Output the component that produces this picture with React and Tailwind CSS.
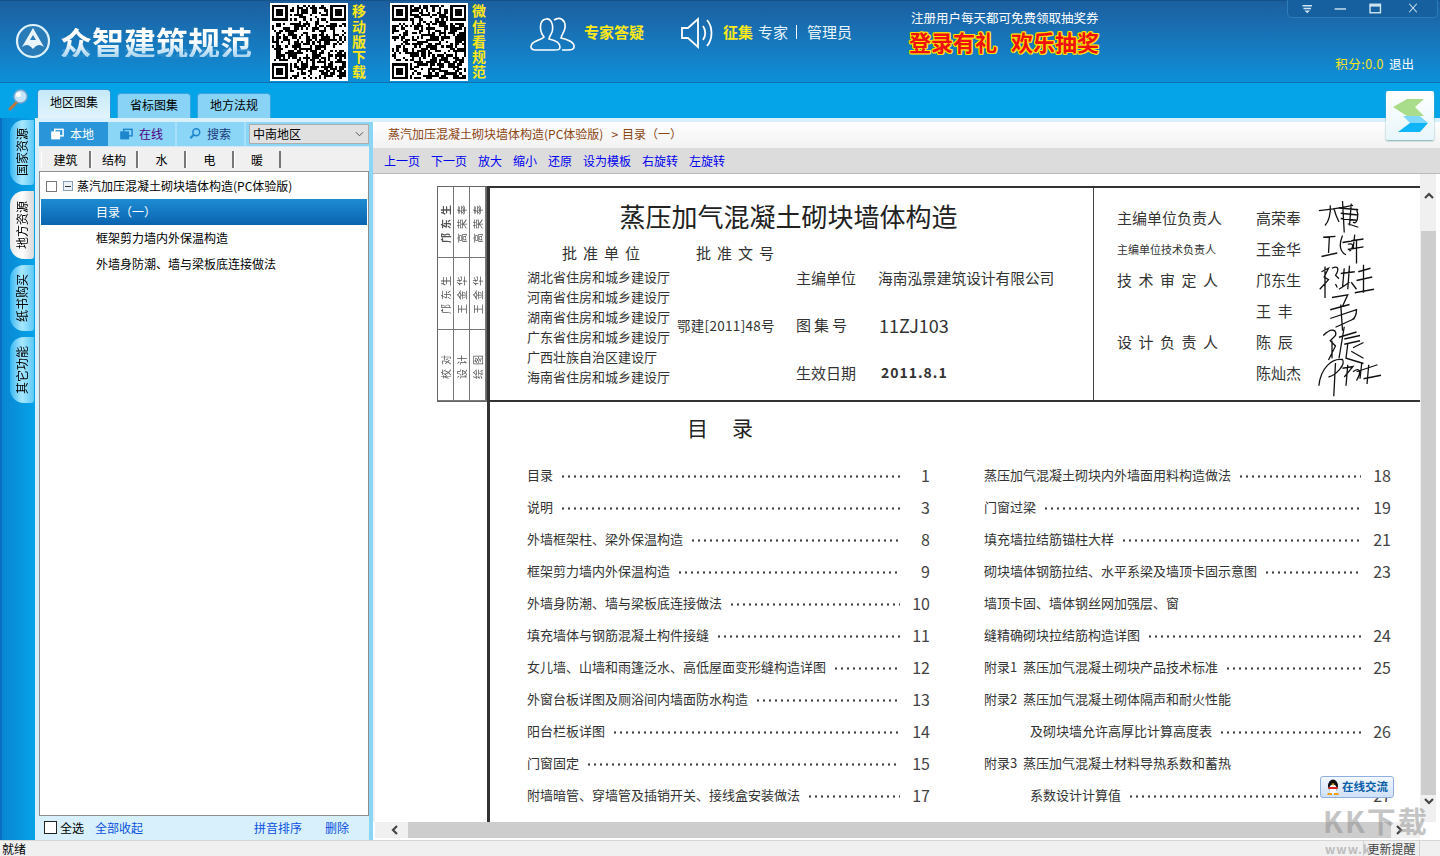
import React from "react";

const CJK = '"Noto Sans CJK SC","Noto Sans",sans-serif';

function qrPath(seed) {
  const n = 33;
  let s = seed;
  const rnd = () => {
    s = (s * 1664525 + 1013904223) >>> 0;
    return (s >>> 16) & 1;
  };
  let d = "";
  const inFinder = (x, y) =>
    (x < 8 && y < 8) || (x >= n - 8 && y < 8) || (x < 8 && y >= n - 8);
  for (let y = 0; y < n; y++) {
    for (let x = 0; x < n; x++) {
      if (!inFinder(x, y) && rnd()) d += `M${x} ${y}h1v1h-1z`;
    }
  }
  const finder = (a, b) =>
    `M${a} ${b}h7v7h-7zM${a + 1} ${b + 1}v5h5v-5zM${a + 2} ${b + 2}h3v3h-3z`;
  return d + finder(0, 0) + finder(n - 7, 0) + finder(0, n - 7);
}

function QR({ seed }) {
  return (
    <div className="w-[78px] h-[78px] bg-white p-[2px] shrink-0">
      <svg viewBox="0 0 33 33" className="w-full h-full" shapeRendering="crispEdges">
        <path d={qrPath(seed)} fill="#000" fillRule="evenodd" />
      </svg>
    </div>
  );
}

function VText({ chars }) {
  return (
    <div className="w-[15px] h-[78px] flex items-center justify-center text-[14px] leading-[15px] font-bold text-[#ffe81a] tracking-[1.2px] [writing-mode:vertical-rl]">
      {chars}
    </div>
  );
}

function SideTab({ label, active, h }) {
  return (
    <div
      className={`w-[24px] ml-[10px] rounded-tl-[14px] rounded-bl-[14px] rounded-br-[3px] flex items-center justify-center text-[12px] text-black ${
        active
          ? "bg-gradient-to-r from-[#e8e8e8] via-white to-[#d8d8d8]"
          : "bg-gradient-to-r from-[#2cb6f0] via-[#a6e8ff] to-[#5cc8f5]"
      } ${h}`}
    >
      <span className="[writing-mode:vertical-rl] [text-orientation:sideways] rotate-180">{label}</span>
    </div>
  );
}

const leftToc = [
  ["目录", "1"],
  ["说明", "3"],
  ["外墙框架柱、梁外保温构造", "8"],
  ["框架剪力墙内外保温构造", "9"],
  ["外墙身防潮、墙与梁板底连接做法", "10"],
  ["填充墙体与钢筋混凝土构件接缝", "11"],
  ["女儿墙、山墙和雨篷泛水、高低屋面变形缝构造详图", "12"],
  ["外窗台板详图及厕浴间内墙面防水构造", "13"],
  ["阳台栏板详图", "14"],
  ["门窗固定", "15"],
  ["附墙暗管、穿墙管及插销开关、接线盒安装做法", "17"],
];
const rightToc = [
  ["蒸压加气混凝土砌块内外墙面用料构造做法", "18"],
  ["门窗过梁", "19"],
  ["填充墙拉结筋锚柱大样", "21"],
  ["砌块墙体钢筋拉结、水平系梁及墙顶卡固示意图", "23"],
  ["墙顶卡固、墙体钢丝网加强层、窗", ""],
  ["缝精确砌块拉结筋构造详图", "24"],
  ["附录1  蒸压加气混凝土砌块产品技术标准", "25"],
  ["附录2  蒸压加气混凝土砌体隔声和耐火性能", ""],
  ["及砌块墙允许高厚比计算高度表", "26", true],
  ["附录3  蒸压加气混凝土材料导热系数和蓄热", ""],
  ["系数设计计算值", "27", true],
];

function TocRow({ text, num, indent }) {
  return (
    <div className={`h-[32px] flex items-center text-[13px] text-[#333] ${indent ? "pl-[46px]" : ""}`}>
      <span className="whitespace-pre">{text}</span>
      {num ? (
        <>
          <span className="flex-1 ml-[7px] mr-[8px] h-[3px] translate-y-[1px] bg-[radial-gradient(circle,#444_1px,transparent_1.3px)] bg-[length:6px_3px] bg-repeat-x" />
          <span className="text-[16px] w-[22px] text-right text-[#444]">{num}</span>
        </>
      ) : null}
    </div>
  );
}

const signs = [
  "M1 11 C12 10 24 8 40 5 M14 5 C15 14 12 24 8 28 M18 8 C20 16 22 20 24 24 M28 0 L30 36 M24 8 L46 10 M26 14 L46 16 M26 20 L44 22 M38 3 L36 28 M44 9 C47 16 45 28 40 24 M34 26 L46 30",
  "M6 6 L20 5 M13 6 L12 24 M4 28 L22 24 M28 4 C24 14 24 22 32 26 M28 12 L40 10 M34 14 C40 12 42 16 36 22 M42 3 L40 20 M38 10 L52 8 M34 20 L52 17 M44 10 L44 36",
  "M4 10 L12 6 L7 16 L12 19 L2 30 M8 4 L8 40 M16 6 C24 2 24 8 20 14 L24 18 M20 24 L22 28 M30 6 L28 28 M26 12 L42 10 M36 3 L34 30 M24 30 L36 22 M38 22 L44 30 M46 10 L60 6 M52 2 L52 34 M44 20 L62 16 M42 34 L64 30",
  "M16 4 L34 1 L28 14 M14 18 L36 12 M26 12 L28 42 M14 28 L44 18 C44 24 42 28 38 30 M20 38 L42 28",
  "M6 12 C16 2 22 6 20 12 L14 18 L20 24 L12 40 M16 18 L16 38 M30 2 L24 38 M24 14 L44 8 M30 16 L48 12 M30 22 L48 18 M34 22 L32 38 L52 44 M40 26 L52 20 M38 30 L52 38",
  "M1 34 C3 14 16 2 28 4 C32 10 20 22 12 24 M20 8 L18 46 M28 14 L40 12 L30 24 M34 10 L32 34 M40 18 C48 12 50 18 44 28 M50 8 L48 26 M44 18 L68 10 M52 26 L72 22 M58 10 L56 32",
];

function Sign({ d }) {
  return (
    <svg viewBox="0 0 64 40" className="w-[56px] h-[35px] overflow-visible ml-[2px]" fill="none" stroke="#111" strokeWidth="1.5">
      <path d={d} />
    </svg>
  );
}

function App() {
  return (
    <div
      className="w-[1440px] h-[856px] overflow-hidden relative flex flex-col bg-[#05a3e8] text-[12px]"
      style={{ fontFamily: CJK }}
    >
      {/* header */}
      <div className="h-[83px] shrink-0 flex bg-gradient-to-b from-[#1b5f9f] to-[#0b90d9] border-t border-[#14508a] border-b border-b-[#0f6fb2]">
        <div className="w-[270px] shrink-0 flex items-center pl-[15px] gap-[9px] pb-[2px]">
          <svg viewBox="0 0 36 36" className="w-[36px] h-[36px] shrink-0">
            <circle cx="18" cy="18" r="16" fill="#2a7cb8" stroke="#dff2fb" strokeWidth="2.2" />
            <path d="M18 5 L29 24 C25 21 22 21 18 26 C14 21 11 21 7 24 Z" fill="#eaf6fc" />
            <path d="M18 12 L21 17 L15 17 Z" fill="#2a7cb8" />
          </svg>
          <span className="text-[32px] leading-none font-bold whitespace-nowrap bg-gradient-to-b from-white via-white to-[#a8d4f0] bg-clip-text text-transparent [-webkit-box-reflect:below_-8px_linear-gradient(transparent_65%,rgba(255,255,255,0.22))]">
            众智建筑规范
          </span>
        </div>
        <div className="pt-[2px] flex gap-[3px] w-[120px] shrink-0">
          <QR seed={17} />
          <VText chars="移动版下载" />
        </div>
        <div className="pt-[2px] flex gap-[3px] w-[140px] shrink-0">
          <QR seed={92} />
          <VText chars="微信看规范" />
        </div>
        <div className="flex items-start pt-[14px] w-[150px] shrink-0 gap-[8px]">
          <svg viewBox="0 0 46 34" className="w-[46px] h-[34px] shrink-0 mt-[2px]" fill="none" stroke="#fff" strokeWidth="1.6">
            <path d="M14 20 C9 14 9 3 16 2 C21 1 24 8 22 15 C21 18 19 20 19 22 C24 23 30 25 30 30 C30 33 28 33 24 33 L5 33 C1 33 0 30 2 27 C4 24 11 23 14 20 Z" />
            <path d="M24 3 C30 -1 36 3 35 11 C34 16 31 19 31 21 C36 22 45 25 44 30 C44 33 41 33 38 33 L32 33" />
          </svg>
          <span className="text-[15px] font-bold text-[#ffe81a] leading-[34px] whitespace-nowrap">专家答疑</span>
        </div>
        <div className="flex items-start pt-[14px] w-[232px] shrink-0">
          <svg viewBox="0 0 36 32" className="w-[36px] h-[32px] shrink-0 mt-[2px]" fill="none" stroke="#fff" strokeWidth="1.8">
            <path d="M2 11 H8 L18 2 V30 L8 21 H2 Z" />
            <path d="M23 9 C26 13 26 19 23 23" />
            <path d="M27 3 C33 10 33 22 27 29" />
          </svg>
          <span className="ml-[7px] text-[15px] font-bold text-[#ffe81a] leading-[34px] whitespace-nowrap">征集</span>
          <span className="ml-[5px] text-[15px] text-[#e8f4fb] leading-[34px] whitespace-nowrap">专家</span>
          <span className="ml-[8px] mt-[10px] w-px h-[14px] bg-white" />
          <span className="ml-[10px] text-[15px] text-[#e8f4fb] leading-[34px] whitespace-nowrap">管理员</span>
        </div>
        <div className="flex flex-col w-[200px] shrink-0 pt-[9px] -ml-[3px]">
          <span className="text-[12.5px] leading-[16px] text-white whitespace-nowrap pl-[2px]">注册用户每天都可免费领取抽奖券</span>
          <div className="flex gap-[14px] mt-[1px] text-[22px] leading-[28px] font-bold text-[#f01010] [text-shadow:1px_0_#ffe000,-1px_0_#ffe000,0_1px_#ffe000,0_-1px_#ffe000,1px_1px_#ffe000,-1px_-1px_#ffe000,1px_-1px_#ffe000,-1px_1px_#ffe000] whitespace-nowrap">
            <span>登录有礼</span>
            <span>欢乐抽奖</span>
          </div>
        </div>
        <div className="flex-1 flex items-end justify-end pr-[26px] pb-[9px] gap-[5px] text-[12.5px] leading-[18px] whitespace-nowrap">
          <span className="text-[#f5e61a] tracking-[0.5px]">积分:0.0</span>
          <span className="text-white">退出</span>
        </div>
      </div>

      {/* window controls */}
      <div className="absolute top-0 right-[2px] w-[151px] h-[18px] bg-[#17609f] border border-t-0 border-[#2a7db8] rounded-b-[5px] flex items-center text-[#cfe4f2]">
        <svg viewBox="0 0 151 18" className="w-full h-full" fill="none" stroke="#cfe4f2" strokeWidth="1.5">
          <path d="M12 6 H22 M13 9 H21" />
          <path d="M14 11 H20 L17 14 Z" fill="#cfe4f2" stroke="none" />
          <path d="M46 9.5 H58" />
          <rect x="83.5" y="4.5" width="11" height="9" />
          <path d="M83 6 H95" strokeWidth="2" />
          <path d="M125 4 L133 13 M133 4 L125 13" strokeWidth="1.1" />
        </svg>
      </div>

      {/* tab strip */}
      <div className="h-[35px] shrink-0 flex items-end pl-[8px] bg-[#05a3e8]">
        <svg viewBox="0 0 20 22" className="w-[20px] h-[22px] mb-[7px] shrink-0">
          <path d="M9 13 L2 20" stroke="#b8763a" strokeWidth="3" strokeLinecap="round" />
          <circle cx="12.5" cy="7.5" r="6.5" fill="#c6e4fb" stroke="#7fa7cc" strokeWidth="1.4" />
          <circle cx="10.5" cy="5.5" r="2.5" fill="#fff" />
        </svg>
        <div className="ml-[9px] w-[74px] h-[29px] pb-[4px] rounded-t-[4px] bg-gradient-to-b from-[#c4e8fa] to-[#e2f4fd] border-t border-x border-[#2a95d8] flex items-center justify-center text-black">
          地区图集
        </div>
        <div className="ml-[6px] w-[74px] h-[25px] pb-[3px] rounded-t-[4px] bg-[#88d3f6] border-t border-x border-[#3aa6e0] flex items-center justify-center text-black">
          省标图集
        </div>
        <div className="ml-[6px] w-[74px] h-[25px] pb-[3px] rounded-t-[4px] bg-[#88d3f6] border-t border-x border-[#3aa6e0] flex items-center justify-center text-black">
          地方法规
        </div>
      </div>

      {/* logo card */}
      <div className="absolute left-[1386px] top-[91px] w-[48px] h-[49px] bg-gradient-to-b from-white to-[#e8f6fb] rounded-[2px] shadow-[0_1px_2px_#7aa]">
        <svg viewBox="0 0 48 49" className="w-full h-full">
          <path d="M21 8 H38 L29 16 L38 25 H21 L7 16 Z" fill="#a9dc8b" />
          <path d="M17 25 H34 L42 32 H24 Z" fill="#7fd8fb" />
          <path d="M24 32 H42 L34 41 H12 Z" fill="#10b4f8" />
        </svg>
      </div>

      {/* main */}
      <div className="flex-1 min-h-0 flex">
        {/* side tabs */}
        <div className="w-[35px] shrink-0 bg-gradient-to-r from-[#0a86d2] to-[#05a3e8] pt-[2px] border-l-2 border-[#0a6fc0]">
          <div className="-ml-[2px] flex flex-col gap-[6px]">
            <SideTab label="国家资源" h="h-[65px]" />
            <SideTab label="地方资源" active h="h-[68px]" />
            <SideTab label="纸书购买" h="h-[66px]" />
            <SideTab label="其它功能" h="h-[66px]" />
          </div>
        </div>

        {/* left panel */}
        <div className="w-[338px] shrink-0 bg-[#d8f0fc] pt-[4px] flex flex-col">
          <div className="flex flex-1 min-h-0">
            <div className="w-[4px] shrink-0" />
            <div className="w-[330px] shrink-0 flex flex-col">
              <div className="h-[24px] shrink-0 bg-[#8bd5f6] flex items-center">
                <div className="w-[69px] h-full pb-[1px] bg-[#2a95d8] text-white flex items-center gap-[6px] pl-[12px]">
                  <svg viewBox="0 0 14 12" className="w-[13px] h-[12px] shrink-0" fill="none" stroke="#fff" strokeWidth="1.6">
                    <rect x="4" y="1" width="9" height="7" />
                    <rect x="1" y="4" width="8" height="7" fill="#fff" />
                  </svg>
                  本地
                </div>
                <div className="w-[69px] h-full pb-[1px] flex items-center gap-[6px] pl-[12px] text-[#4b0082] border-r-2 border-[#a8e0f8]">
                  <svg viewBox="0 0 14 12" className="w-[13px] h-[12px] shrink-0" fill="none" stroke="#1e86cc" strokeWidth="1.6">
                    <rect x="4" y="1" width="9" height="7" />
                    <rect x="1" y="4" width="8" height="7" fill="#1e86cc" />
                  </svg>
                  在线
                </div>
                <div className="w-[69px] h-full pb-[1px] flex items-center gap-[6px] pl-[12px] text-[#1a3a7a] border-r-2 border-[#a8e0f8]">
                  <svg viewBox="0 0 14 14" className="w-[12px] h-[13px] shrink-0" fill="none" stroke="#1e86cc" strokeWidth="1.8">
                    <circle cx="8.5" cy="5.5" r="4" />
                    <path d="M5.5 8.5 L1.5 12.5" strokeWidth="2.4" />
                  </svg>
                  搜索
                </div>
                <div className="ml-[3px] w-[120px] h-[20px] bg-[#e1e1e1] border border-[#adadad] flex items-center justify-between pl-[3px] pr-[4px] text-black">
                  <span>中南地区</span>
                  <svg viewBox="0 0 10 6" className="w-[9px] h-[6px]" fill="none" stroke="#555" strokeWidth="1.1">
                    <path d="M1 1 L5 5 L9 1" />
                  </svg>
                </div>
              </div>
              <div className="h-[22px] shrink-0 bg-[#f0f0f0] pl-[2px] pt-[4px] flex border-t border-[#cfe8f6]">
                {[
                  ["建筑", "w-[50px]"],
                  ["结构", "w-[47px]"],
                  ["水", "w-[48px]"],
                  ["电", "w-[48px]"],
                  ["暖", "w-[47px]"],
                ].map(([t, w]) => (
                  <div key={t} className={`${w} h-[18px] border-r-2 border-[#777] border-l border-l-white flex items-center justify-center text-black`}>
                    {t}
                  </div>
                ))}
              </div>
              <div className="h-[3px] shrink-0 bg-[#f0f0f0]" />
              <div className="h-[645px] shrink-0 bg-white border border-[#8e8e8e] p-[1px] text-black flex flex-col">
                <div className="h-[26px] flex items-center pl-[5px] shrink-0">
                  <span className="w-[11px] h-[11px] border border-[#777] bg-white shrink-0" />
                  <span className="ml-[6px] w-[10px] h-[10px] border border-[#8aa0b8] bg-[#eef3f8] flex items-center justify-center shrink-0">
                    <span className="w-[6px] h-px bg-[#333]" />
                  </span>
                  <span className="ml-[4px] whitespace-nowrap">蒸汽加压混凝土砌块墙体构造(PC体验版)</span>
                </div>
                <div className="h-[26px] shrink-0 bg-gradient-to-b from-[#1d8cd2] to-[#0a64b0] text-white flex items-center pl-[55px]">
                  目录（一）
                </div>
                <div className="h-[26px] shrink-0 flex items-center pl-[55px]">框架剪力墙内外保温构造</div>
                <div className="h-[26px] shrink-0 flex items-center pl-[55px]">外墙身防潮、墙与梁板底连接做法</div>
              </div>
              <div className="flex-1 min-h-0 flex items-center pl-[5px] pb-[1px]">
                <span className="w-[13px] h-[13px] border border-[#222] bg-white shrink-0" />
                <span className="ml-[3px] text-black w-[35px]">全选</span>
                <span className="text-[#0a50e0] w-[159px]">全部收起</span>
                <span className="text-[#0a50e0] w-[71px]">拼音排序</span>
                <span className="text-[#0a50e0]">删除</span>
              </div>
            </div>
            <div className="w-[4px] shrink-0 bg-[#8bd6f7]" />
          </div>
        </div>

        {/* right pane */}
        <div className="flex-1 min-w-0 flex flex-col bg-white">
          <div className="h-[4px] shrink-0 bg-[#d8f0fc]" />
          <div className="h-[26px] pb-[2px] shrink-0 bg-gradient-to-b from-white to-[#f2f2f2] flex items-center pl-[15px] text-[#8b4513] whitespace-nowrap">
            <span>蒸汽加压混凝土砌块墙体构造(PC体验版)</span>
            <span className="ml-[8px]">&gt;</span>
            <span className="ml-[4px]">目录（一）</span>
          </div>
          <div className="h-[26px] shrink-0 bg-[#dcdcdc] border-b border-[#bbb] flex items-center pl-[11px] gap-[11px] text-[#0000ee] whitespace-nowrap">
            <span>上一页</span>
            <span>下一页</span>
            <span>放大</span>
            <span>缩小</span>
            <span>还原</span>
            <span>设为模板</span>
            <span>右旋转</span>
            <span>左旋转</span>
          </div>

          <div className="flex-1 min-h-0 flex">
            <div className="flex-1 min-w-0 flex flex-col">
              <div className="flex-1 min-h-0 flex">
                <div className="w-[2px] shrink-0 bg-[#f0f0f0]" />
                {/* page */}
                <div className="w-[1046px] shrink-0 overflow-hidden bg-white pt-[12px] pl-[62px] text-[#333]">
                  <div className="flex w-[984px]">
                    {/* stamp */}
                    <div className="w-[50px] h-[216px] shrink-0 border border-[#666] grid grid-cols-3 grid-rows-3 text-[10px] text-[#555]">
                      {[
                        ["邝东生", "font-bold"],
                        ["高荣奉", ""],
                        ["高荣奉", ""],
                        ["邝东生", ""],
                        ["王金华", ""],
                        ["王金华", ""],
                        ["校对", ""],
                        ["设计", ""],
                        ["绘图", ""],
                      ].map(([t, c], i) => (
                        <div key={i} className={`border-r border-b border-[#777] flex items-center justify-center overflow-hidden ${c}`}>
                          <span className="[writing-mode:vertical-rl] [text-orientation:sideways] rotate-180 tracking-[4px]">{t}</span>
                        </div>
                      ))}
                    </div>
                    {/* cover */}
                    <div className="flex-1 h-[216px] flex border-t-[2px] border-l-[3px] border-b-[2px] border-[#333]">
                      <div className="w-[603px] shrink-0 flex flex-col">
                        <div className="h-[51px] shrink-0 flex items-end justify-center text-[26px] leading-[40px] text-[#222] whitespace-nowrap pb-[3px] pr-[6px]">
                          蒸压加气混凝土砌块墙体构造
                        </div>
                        <div className="flex flex-1 min-h-0 text-[14.5px] pt-[3px]">
                          <div className="w-[187px] shrink-0 pl-[37px] whitespace-nowrap">
                            <div className="h-[25px] pl-[35px] text-[15px] tracking-[6px] leading-[22px]">批准单位</div>
                            {["湖北省住房和城乡建设厅", "河南省住房和城乡建设厅", "湖南省住房和城乡建设厅", "广东省住房和城乡建设厅", "广西壮族自治区建设厅", "海南省住房和城乡建设厅"].map((t) => (
                              <div key={t} className="h-[20px] leading-[20px] text-[13px]">{t}</div>
                            ))}
                          </div>
                          <div className="w-[119px] shrink-0 whitespace-nowrap">
                            <div className="h-[22px] pl-[19px] text-[15px] tracking-[6px] leading-[22px]">批准文号</div>
                            <div className="mt-[51px] text-[13.5px] tracking-[0.3px] leading-[20px]">鄂建[2011]48号</div>
                          </div>
                          <div className="flex-1 pt-[25px] whitespace-nowrap">
                            <div className="h-[47px] flex items-start">
                              <span className="w-[82px] text-[15px]">主编单位</span>
                              <span className="text-[14.7px]">海南泓景建筑设计有限公司</span>
                            </div>
                            <div className="h-[48px] flex items-start">
                              <span className="w-[83px] text-[15px] tracking-[3px]">图集号</span>
                              <span className="text-[18px] leading-[22px]">11ZJ103</span>
                            </div>
                            <div className="h-[47px] flex items-start">
                              <span className="w-[85px] text-[15px]">生效日期</span>
                              <span className="text-[14px] font-bold tracking-[1px]">2011.8.1</span>
                            </div>
                          </div>
                        </div>
                      </div>
                      <div className="flex-1 min-w-0 border-l border-[#444] pl-[23px] pt-[15px] text-[15px]">
                        {[
                          ["主编单位负责人", "高荣奉", signs[0], "w-[139px]"],
                          ["主编单位技术负责人", "王金华", signs[1], "w-[139px] text-[11px]"],
                          ["技术审定人", "邝东生", signs[2], "w-[139px] tracking-[6.5px]"],
                          ["", "王  丰", signs[3], "w-[139px]"],
                          ["设计负责人", "陈  辰", signs[4], "w-[139px] tracking-[6.5px]"],
                          ["", "陈灿杰", signs[5], "w-[139px]"],
                        ].map(([a, b, d, c], i) => (
                          <div key={i} className="h-[31px] flex items-center whitespace-nowrap">
                            <span className={`shrink-0 ${c}`}>{a}</span>
                            <span className="w-[60px] shrink-0 whitespace-pre">{b}</span>
                            <Sign d={d} />
                          </div>
                        ))}
                      </div>
                    </div>
                  </div>
                  <div className="ml-[50px] h-[500px] border-l-[3px] border-[#333]">
                    <div className="h-[57px] pb-[5px] flex items-center pl-[197px] text-[21px] tracking-[24px] text-[#222]">目录</div>
                    <div className="flex pl-[37px]">
                      <div className="w-[403px] shrink-0">
                        {leftToc.map(([t, n]) => (
                          <TocRow key={t} text={t} num={n} />
                        ))}
                      </div>
                      <div className="w-[407px] shrink-0 ml-[54px]">
                        {rightToc.map(([t, n, ind]) => (
                          <TocRow key={t} text={t} num={n} indent={ind} />
                        ))}
                      </div>
                    </div>
                  </div>
                </div>
              </div>
              {/* h scrollbar */}
              <div className="h-[16px] shrink-0 ml-[2px] bg-[#f0f0f0] flex items-center">
                <svg viewBox="0 0 10 10" className="w-[10px] h-[10px] ml-[15px] shrink-0" fill="none" stroke="#444" strokeWidth="2.2">
                  <path d="M7 1 L3 5 L7 9" />
                </svg>
                <div className="ml-[8px] w-[983px] h-full bg-[#cdcdcd]" />
                <svg viewBox="0 0 10 10" className="w-[10px] h-[10px] ml-[3px] shrink-0" fill="none" stroke="#444" strokeWidth="2.2">
                  <path d="M3 1 L7 5 L3 9" />
                </svg>
              </div>
              <div className="h-[2px] shrink-0 bg-white" />
            </div>
            {/* v scrollbar */}
            <div className="w-[20px] shrink-0 flex flex-col pr-[4px]">
              <div className="w-[16px] h-[648px] bg-[#f0f0f0] flex flex-col items-center pl-[1px]">
                <svg viewBox="0 0 10 10" className="w-[10px] h-[10px] mt-[17px] shrink-0" fill="none" stroke="#444" strokeWidth="2.2">
                  <path d="M1 7 L5 3 L9 7" />
                </svg>
                <div className="mt-[30px] w-full h-[564px] bg-[#cdcdcd] shrink-0" />
                <svg viewBox="0 0 10 10" className="w-[10px] h-[10px] mt-[1px] shrink-0" fill="none" stroke="#444" strokeWidth="2.2">
                  <path d="M1 3 L5 7 L9 3" />
                </svg>
              </div>
            </div>
          </div>
        </div>
      </div>

      {/* status bar */}
      <div className="h-[16px] shrink-0 bg-[#f0f0f0] border-t border-[#d6d6d6] flex items-center text-black leading-[15px]">
        <span className="pl-[2px]">就绪</span>
        <div className="ml-auto mr-[20px] w-[57px] border-x border-[#d0d0d0] text-center text-[#444]">更新提醒</div>
      </div>

      {/* QQ chip */}
      <div className="absolute left-[1320px] top-[776px] w-[74px] h-[22px] rounded-[3px] bg-gradient-to-b from-[#f4f8ff] to-[#cfe0f8] border border-[#8fb0dc] flex items-center pl-[5px] gap-[2px] text-[11.5px] font-bold text-[#0b5ea8] whitespace-nowrap">
        <svg viewBox="0 0 14 16" className="w-[14px] h-[16px] shrink-0">
          <ellipse cx="7" cy="7" rx="5" ry="6.5" fill="#111" />
          <ellipse cx="7" cy="10" rx="3.8" ry="4.5" fill="#fff" />
          <path d="M2 8 H12 L11 10 H3 Z" fill="#e02020" />
          <path d="M5.5 4.5 H8.5 L7 6.5 Z" fill="#f5b000" />
          <path d="M2 14 H6 V16 H1 Z M8 14 H12 L13 16 H8 Z" fill="#f5a000" />
        </svg>
        在线交流
      </div>

      {/* watermark */}
      <div className="absolute left-[1323px] top-[802px] w-[116px] h-[36px] flex items-center text-[29px] leading-none font-bold tracking-[2px] text-[#8c8c8c]/50 whitespace-nowrap pointer-events-none">
        KK下载
      </div>
      <div className="absolute left-[1325px] top-[842px] text-[12px] leading-[14px] font-bold text-[#bdbdbd] tracking-[1px] pointer-events-none">
        www.k
      </div>
    </div>
  );
}

export default App;
